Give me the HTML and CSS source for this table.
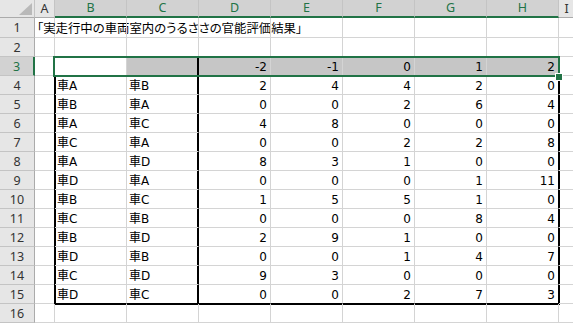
FILE: index.html
```html
<!DOCTYPE html>
<html lang="ja">
<head>
<meta charset="utf-8">
<title>Sheet1</title>
<link rel="stylesheet" href="styles.css">
</head>
<body>
<div class="sheet">
  <!-- column headers -->
  <div class="hdr corner"><svg width="13" height="12" viewBox="0 0 13 12"><polygon points="13,0 13,12 0,12" fill="#b9b9b9"/></svg></div>
  <div class="hdr ch">A</div>
  <div class="hdr ch sel">B</div>
  <div class="hdr ch sel">C</div>
  <div class="hdr ch sel">D</div>
  <div class="hdr ch sel">E</div>
  <div class="hdr ch sel">F</div>
  <div class="hdr ch sel">G</div>
  <div class="hdr ch sel">H</div>
  <div class="hdr ch">I</div>

  <!-- row 1 -->
  <div class="hdr rh">1</div>
  <div class="cell title">「実走行中の車両室内のうるささの官能評価結果」</div>
  <div class="cell"></div><div class="cell"></div><div class="cell"></div><div class="cell"></div><div class="cell"></div><div class="cell"></div><div class="cell"></div><div class="cell"></div>

  <!-- row 2 -->
  <div class="hdr rh">2</div>
  <div class="cell"></div><div class="cell"></div><div class="cell"></div><div class="cell"></div><div class="cell"></div><div class="cell"></div><div class="cell"></div><div class="cell"></div><div class="cell"></div>

  <!-- row 3: level header -->
  <div class="hdr rh sel">3</div>
  <div class="cell"></div>
  <div class="cell"></div>
  <div class="cell hl D"></div>
  <div class="cell num hl">-2</div>
  <div class="cell num hl">-1</div>
  <div class="cell num hl">0</div>
  <div class="cell num hl">1</div>
  <div class="cell num hl">2</div>
  <div class="cell"></div>

  <div class="hdr rh">4</div><div class="cell"></div>
  <div class="cell L">車A</div><div class="cell D">車B</div>
  <div class="cell num">2</div><div class="cell num">4</div><div class="cell num">4</div><div class="cell num">2</div><div class="cell num R">0</div><div class="cell"></div>

  <div class="hdr rh">5</div><div class="cell"></div>
  <div class="cell L">車B</div><div class="cell D">車A</div>
  <div class="cell num">0</div><div class="cell num">0</div><div class="cell num">2</div><div class="cell num">6</div><div class="cell num R">4</div><div class="cell"></div>

  <div class="hdr rh">6</div><div class="cell"></div>
  <div class="cell L">車A</div><div class="cell D">車C</div>
  <div class="cell num">4</div><div class="cell num">8</div><div class="cell num">0</div><div class="cell num">0</div><div class="cell num R">0</div><div class="cell"></div>

  <div class="hdr rh">7</div><div class="cell"></div>
  <div class="cell L">車C</div><div class="cell D">車A</div>
  <div class="cell num">0</div><div class="cell num">0</div><div class="cell num">2</div><div class="cell num">2</div><div class="cell num R">8</div><div class="cell"></div>

  <div class="hdr rh">8</div><div class="cell"></div>
  <div class="cell L">車A</div><div class="cell D">車D</div>
  <div class="cell num">8</div><div class="cell num">3</div><div class="cell num">1</div><div class="cell num">0</div><div class="cell num R">0</div><div class="cell"></div>

  <div class="hdr rh">9</div><div class="cell"></div>
  <div class="cell L">車D</div><div class="cell D">車A</div>
  <div class="cell num">0</div><div class="cell num">0</div><div class="cell num">0</div><div class="cell num">1</div><div class="cell num R">11</div><div class="cell"></div>

  <div class="hdr rh">10</div><div class="cell"></div>
  <div class="cell L">車B</div><div class="cell D">車C</div>
  <div class="cell num">1</div><div class="cell num">5</div><div class="cell num">5</div><div class="cell num">1</div><div class="cell num R">0</div><div class="cell"></div>

  <div class="hdr rh">11</div><div class="cell"></div>
  <div class="cell L">車C</div><div class="cell D">車B</div>
  <div class="cell num">0</div><div class="cell num">0</div><div class="cell num">0</div><div class="cell num">8</div><div class="cell num R">4</div><div class="cell"></div>

  <div class="hdr rh">12</div><div class="cell"></div>
  <div class="cell L">車B</div><div class="cell D">車D</div>
  <div class="cell num">2</div><div class="cell num">9</div><div class="cell num">1</div><div class="cell num">0</div><div class="cell num R">0</div><div class="cell"></div>

  <div class="hdr rh">13</div><div class="cell"></div>
  <div class="cell L">車D</div><div class="cell D">車B</div>
  <div class="cell num">0</div><div class="cell num">0</div><div class="cell num">1</div><div class="cell num">4</div><div class="cell num R">7</div><div class="cell"></div>

  <div class="hdr rh">14</div><div class="cell"></div>
  <div class="cell L">車C</div><div class="cell D">車D</div>
  <div class="cell num">9</div><div class="cell num">3</div><div class="cell num">0</div><div class="cell num">0</div><div class="cell num R">0</div><div class="cell"></div>

  <div class="hdr rh">15</div><div class="cell"></div>
  <div class="cell L B">車D</div><div class="cell D B">車C</div>
  <div class="cell num B">0</div><div class="cell num B">0</div><div class="cell num B">2</div><div class="cell num B">7</div><div class="cell num R B">3</div><div class="cell"></div>

  <div class="hdr rh">16</div>
  <div class="cell"></div><div class="cell"></div><div class="cell"></div><div class="cell"></div><div class="cell"></div><div class="cell"></div><div class="cell"></div><div class="cell"></div><div class="cell"></div>

  <!-- selection B3:H3 and its fill handle -->
  <div class="selection"></div>
  <div class="handle"></div>
</div>
</body>
</html>
```

FILE: styles.css
```css
html, body {
  margin: 0;
  background: #fff;
  overflow: hidden;
}

.sheet {
  position: relative;
  display: grid;
  grid-template-columns: 35px 20px repeat(7, 72px) 16px;
  grid-template-rows: 18px 20px repeat(15, 19px);
  font-family: "DejaVu Sans", "Noto Sans CJK JP", sans-serif;
  font-size: 12px;
  color: #000;
}

/* worksheet cells */
.cell {
  box-sizing: border-box;
  border-right: 1px solid #d4d4d4;
  border-bottom: 1px solid #d4d4d4;
  display: flex;
  align-items: flex-end;
  justify-content: flex-start;
  padding: 0 3px 1px 2px;
  white-space: nowrap;
  line-height: 14px;
  min-width: 0;
}

.num {
  justify-content: flex-end;
}

.title {
  font-family: "Noto Sans CJK JP", sans-serif;
  font-size: 12.4px;
  font-feature-settings: "palt";
  overflow: visible;
  padding-bottom: 2px;
}

/* selected range shading (active cell stays white) */
.hl {
  background: #c6c6c6;
}

/* thick range borders */
.L { box-shadow: -1px 0 0 #000, inset 1px 0 0 #000; }
.D { border-right-color: #000; box-shadow: inset -1px 0 0 #000; }
.R { border-right-color: #000; box-shadow: 1px 0 0 #000; }
.B { border-bottom-color: #000; box-shadow: 0 1px 0 #000; }
.L.B { box-shadow: -1px 0 0 #000, -1px 1px 0 #000, 0 1px 0 #000, inset 1px 0 0 #000; }
.D.B { box-shadow: inset -1px 0 0 #000, 0 1px 0 #000; }
.R.B { box-shadow: 1px 0 0 #000, 1px 1px 0 #000, 0 1px 0 #000; }

/* row / column headers */
.hdr {
  box-sizing: border-box;
  background: #e6e6e6;
  border-right: 1px solid #c4c4c4;
  border-bottom: 1px solid #c4c4c4;
  display: flex;
  align-items: center;
  justify-content: center;
  font-family: "Noto Sans", sans-serif;
  font-size: 12.5px;
  color: #333;
  line-height: 1;
}

.corner {
  align-items: flex-end;
  justify-content: flex-end;
  padding: 0 2px 2px 0;
  border-bottom-color: #ababab;
}

.ch {
  border-bottom-color: #ababab;
  padding-top: 1px;
}

.rh {
  border-right-color: #ababab;
  justify-content: center;
  padding-top: 2px;
}

.hdr.sel {
  background: #d2d2d2;
  color: #217346;
}

.ch.sel {
  border-bottom: 2px solid #217346;
}

.rh.sel {
  border-right: 2px solid #217346;
}

.ch:last-of-type {
  border-right: none;
}

/* selection outline over the sheet */
.selection {
  position: absolute;
  left: 53px;
  top: 56px;
  width: 507px;
  height: 21px;
  box-sizing: border-box;
  border: 2px solid #217346;
  pointer-events: none;
}

.handle {
  position: absolute;
  left: 555px;
  top: 73px;
  width: 8px;
  height: 8px;
  box-sizing: border-box;
  background: #217346;
  border: 1px solid #fff;
}
```
